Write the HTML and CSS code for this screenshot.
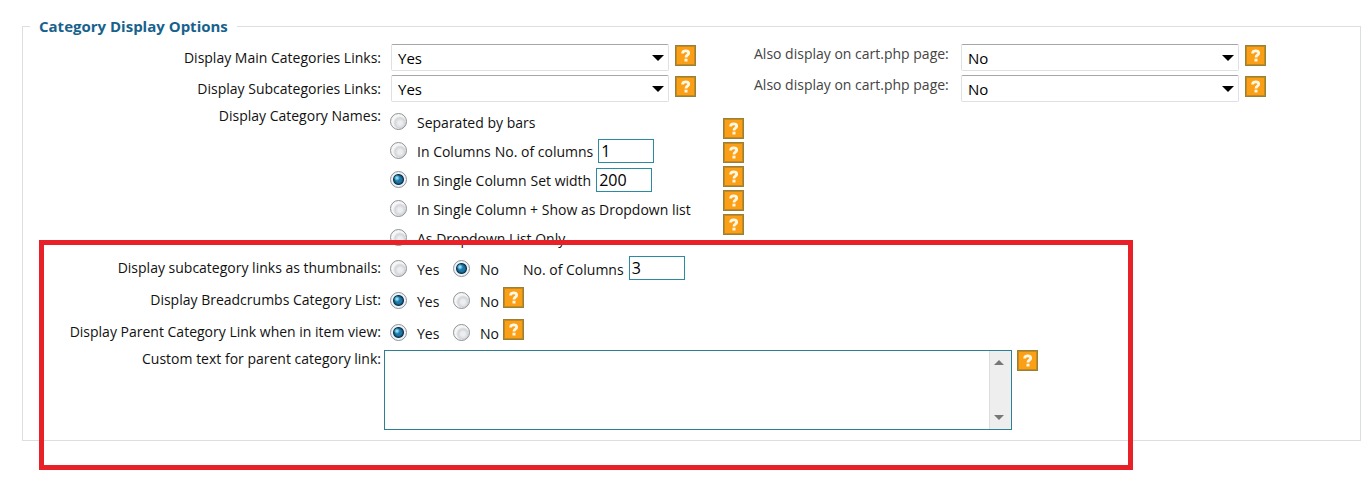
FILE: index.html
```html
<!DOCTYPE html>
<html lang="en">
<head>
    <meta charset="UTF-8">
    <meta name="viewport" content="width=device-width, initial-scale=1.0">
    <title>Category Display Options</title>
    <link rel="stylesheet" href="styles.css">
</head>
<body>
    <svg class="defs" aria-hidden="true">
        <symbol id="help" viewBox="0 0 21 21">
            <rect width="21" height="21" fill="#97803a"/>
            <rect x="1" y="1" width="19" height="19" fill="#c98a1c"/>
            <rect x="2" y="2" width="17" height="17" fill="#fb9f16"/>
            <path d="M7.7 8.4V7.8Q8 5.8 10.8 5.8Q13.7 5.8 13.7 8Q13.7 9.3 12.2 10.2Q11 10.9 11 12.4" fill="none" stroke="#fff8e4" stroke-width="2.8"/>
            <rect x="9.5" y="13.7" width="3" height="2.8" fill="#fff8e4"/>
        </symbol>
    </svg>

    <form id="categoryForm">
        <fieldset>
            <legend>Category Display Options</legend>

            <div class="row selects">
                <label class="title" for="mainLinks">Display Main Categories Links:</label>
                <div class="field">
                    <span class="select"><select id="mainLinks" name="mainLinks"><option>Yes</option><option>No</option></select></span>
                    <button type="button" class="help" aria-label="Help"><svg><use href="#help"/></svg></button>
                </div>
                <div class="field">
                    <label class="also" for="mainCart">Also display on cart.php page:</label>
                    <span class="select"><select id="mainCart" name="mainCart"><option>No</option><option>Yes</option></select></span>
                    <button type="button" class="help" aria-label="Help"><svg><use href="#help"/></svg></button>
                </div>
            </div>

            <div class="row selects">
                <label class="title" for="subLinks">Display Subcategories Links:</label>
                <div class="field">
                    <span class="select"><select id="subLinks" name="subLinks"><option>Yes</option><option>No</option></select></span>
                    <button type="button" class="help" aria-label="Help"><svg><use href="#help"/></svg></button>
                </div>
                <div class="field">
                    <label class="also" for="subCart">Also display on cart.php page:</label>
                    <span class="select"><select id="subCart" name="subCart"><option>No</option><option>Yes</option></select></span>
                    <button type="button" class="help" aria-label="Help"><svg><use href="#help"/></svg></button>
                </div>
            </div>

            <div class="row names" role="radiogroup" aria-labelledby="namesTitle">
                <span class="title" id="namesTitle">Display Category Names:</span>
                <div class="options">
                    <div class="option">
                        <input type="radio" id="bars" name="names">
                        <label for="bars">Separated by bars</label>
                    </div>
                    <div class="option">
                        <input type="radio" id="columns" name="names">
                        <label for="columns">In Columns</label>
                        <label class="after" for="columnCount">No. of columns</label>
                        <input type="text" id="columnCount" name="columnCount" value="1">
                    </div>
                    <div class="option">
                        <input type="radio" id="single" name="names" checked>
                        <label for="single">In Single Column</label>
                        <label class="after" for="columnWidth">Set width</label>
                        <input type="text" id="columnWidth" name="columnWidth" value="200">
                    </div>
                    <div class="option">
                        <input type="radio" id="singleDropdown" name="names">
                        <label for="singleDropdown">In Single Column + Show as Dropdown list</label>
                    </div>
                    <div class="option">
                        <input type="radio" id="dropdown" name="names">
                        <label for="dropdown">As Dropdown List Only</label>
                    </div>
                </div>
                <div class="helps">
                    <button type="button" class="help" aria-label="Help"><svg><use href="#help"/></svg></button>
                    <button type="button" class="help" aria-label="Help"><svg><use href="#help"/></svg></button>
                    <button type="button" class="help" aria-label="Help"><svg><use href="#help"/></svg></button>
                    <button type="button" class="help" aria-label="Help"><svg><use href="#help"/></svg></button>
                    <button type="button" class="help" aria-label="Help"><svg><use href="#help"/></svg></button>
                </div>
            </div>

            <div class="row yesno" role="radiogroup" aria-labelledby="thumbsTitle">
                <span class="title" id="thumbsTitle">Display subcategory links as thumbnails:</span>
                <div class="option">
                    <input type="radio" id="thumbsYes" name="thumbs">
                    <label class="yes" for="thumbsYes">Yes</label>
                    <input type="radio" id="thumbsNo" name="thumbs" checked>
                    <label class="no" for="thumbsNo">No</label>
                    <label class="count" for="thumbColumns">No. of Columns</label>
                    <input type="text" id="thumbColumns" name="thumbColumns" value="3">
                </div>
            </div>

            <div class="row yesno" role="radiogroup" aria-labelledby="crumbsTitle">
                <span class="title" id="crumbsTitle">Display Breadcrumbs Category List:</span>
                <div class="option">
                    <input type="radio" id="crumbsYes" name="crumbs" checked>
                    <label class="yes" for="crumbsYes">Yes</label>
                    <input type="radio" id="crumbsNo" name="crumbs">
                    <label class="no" for="crumbsNo">No</label>
                    <button type="button" class="help" aria-label="Help"><svg><use href="#help"/></svg></button>
                </div>
            </div>

            <div class="row yesno" role="radiogroup" aria-labelledby="parentTitle">
                <span class="title" id="parentTitle">Display Parent Category Link when in item view:</span>
                <div class="option">
                    <input type="radio" id="parentYes" name="parent" checked>
                    <label class="yes" for="parentYes">Yes</label>
                    <input type="radio" id="parentNo" name="parent">
                    <label class="no" for="parentNo">No</label>
                    <button type="button" class="help" aria-label="Help"><svg><use href="#help"/></svg></button>
                </div>
            </div>

            <div class="row custom">
                <label class="title" for="customText">Custom text for parent category link:</label>
                <div class="field">
                    <div class="textbox">
                        <textarea id="customText" name="customText"></textarea>
                        <span class="scroll" aria-hidden="true"></span>
                    </div>
                    <button type="button" class="help" aria-label="Help"><svg><use href="#help"/></svg></button>
                </div>
            </div>
        </fieldset>
        <div class="highlight"></div>
    </form>
</body>
</html>
```
FILE: styles.css
```css
body {
    font-family: "Open Sans", "DejaVu Sans Condensed", sans-serif;
    font-size: 14px;
    line-height: 18px;
    color: #111;
    background-color: #fff;
    margin: 0;
}

.defs {
    position: absolute;
    width: 0;
    height: 0;
}

#categoryForm {
    position: relative;
    padding: 17px 11px 51px 22px;
}

fieldset {
    margin: 0;
    padding: 0 0 10px;
    border: 1px solid #dcdfe0;
    min-width: 0;
}

legend {
    margin-left: 7px;
    padding: 0 9px;
    font-size: 15px;
    font-weight: bold;
    color: #17628c;
}

.row {
    display: grid;
    grid-template-columns: 358px 373px 1fr;
}

.title {
    text-align: right;
    white-space: nowrap;
}

.field {
    display: flex;
    align-items: flex-start;
}

/* dropdown rows */
.selects {
    padding-top: 4px;
    height: 27px;
}

legend + .selects {
    padding-top: 9px;
}

.selects .title {
    padding-top: 5px;
}

.selects .field {
    padding-left: 10px;
}

.selects .field + .field {
    padding-left: 0;
}

.also {
    width: 207px;
    padding-top: 1px;
    color: #444;
    white-space: nowrap;
}

.select {
    position: relative;
    width: 278px;
}

.select::after {
    content: "";
    position: absolute;
    top: 11px;
    right: 5px;
    border: 6px solid transparent;
    border-top-color: #000;
    border-bottom: 0;
    pointer-events: none;
}

select {
    appearance: none;
    display: block;
    width: 100%;
    height: 27px;
    padding: 1px 6px 0;
    border: 1px solid #dfe0e4;
    border-top-color: #a5a6aa;
    border-radius: 2px;
    background-color: #fff;
    font: inherit;
    font-size: 15px;
    color: #000;
}

/* help buttons */
.help {
    display: block;
    flex: none;
    width: 21px;
    height: 21px;
    padding: 0;
    border: 0;
    background: none;
    cursor: pointer;
}

.help svg {
    display: block;
    width: 21px;
    height: 21px;
}

.select + .help {
    margin: 1px 0 0 6px;
}

/* radio rows */
.names {
    grid-template-columns: 358px 342px 1fr;
    padding-top: 5px;
}

.helps {
    display: flex;
    flex-direction: column;
    gap: 3px;
    padding-top: 11px;
}

.option {
    display: flex;
    align-items: center;
    height: 29px;
    padding-left: 9px;
    white-space: nowrap;
}

.option label {
    padding-top: 3px;
}

.option .after {
    margin-left: 4px;
}

input[type="radio"] {
    appearance: none;
    flex: none;
    width: 17px;
    height: 17px;
    margin: 0 10px 0 0;
    border: 1px solid #8e9294;
    border-radius: 50%;
    background: radial-gradient(circle at 60% 60%, #eceef0 0 2px, #d3d5d9 5px, #f6f6f6 7px);
}

input[type="radio"]:checked {
    background: radial-gradient(circle at 6px 6px, #c8eefa 0, #45a7cf 2px, transparent 3px), radial-gradient(circle, #1f78a8 0 3px, #0c3550 5px, #f1f4f6 6px);
}

input[type="text"] {
    box-sizing: border-box;
    width: 56px;
    height: 24px;
    margin: 0 0 0 5px;
    padding: 0 2px;
    border: 1px solid #2a8ba3;
    font: inherit;
    font-size: 16px;
    color: #000;
}

.yesno {
    grid-template-columns: 358px 1fr;
    align-items: center;
    height: 32px;
}

.yes {
    width: 36px;
}

.no {
    width: 23px;
}

.count {
    margin-left: 20px;
}

.option .help {
    margin-bottom: 6px;
}

/* custom text */
.custom {
    grid-template-columns: 358px 1fr;
    padding-top: 2px;
}

.custom .field {
    gap: 5px;
    padding-left: 3px;
}

.textbox {
    display: flex;
    box-sizing: border-box;
    width: 628px;
    height: 80px;
    border: 1px solid #2f7f93;
}

textarea {
    flex: 1;
    padding: 2px;
    border: 0;
    outline: 0;
    resize: none;
    font: inherit;
}

.scroll {
    display: flex;
    flex-direction: column;
    justify-content: space-between;
    box-sizing: border-box;
    width: 22px;
    padding: 9px 7px 9px 4px;
    background-color: #eee;
    border-left: 1px solid #ddd;
}

.scroll::before,
.scroll::after {
    content: "";
    border: 5px solid transparent;
}

.scroll::before {
    border-top: 0;
    border-bottom-color: #777;
}

.scroll::after {
    border-bottom: 0;
    border-top-color: #777;
}

/* marks the new options, drawn over the form */
.highlight {
    position: absolute;
    top: 240px;
    left: 39px;
    box-sizing: border-box;
    width: 1094px;
    height: 230px;
    border: 5px solid #e82028;
    pointer-events: none;
}
```
